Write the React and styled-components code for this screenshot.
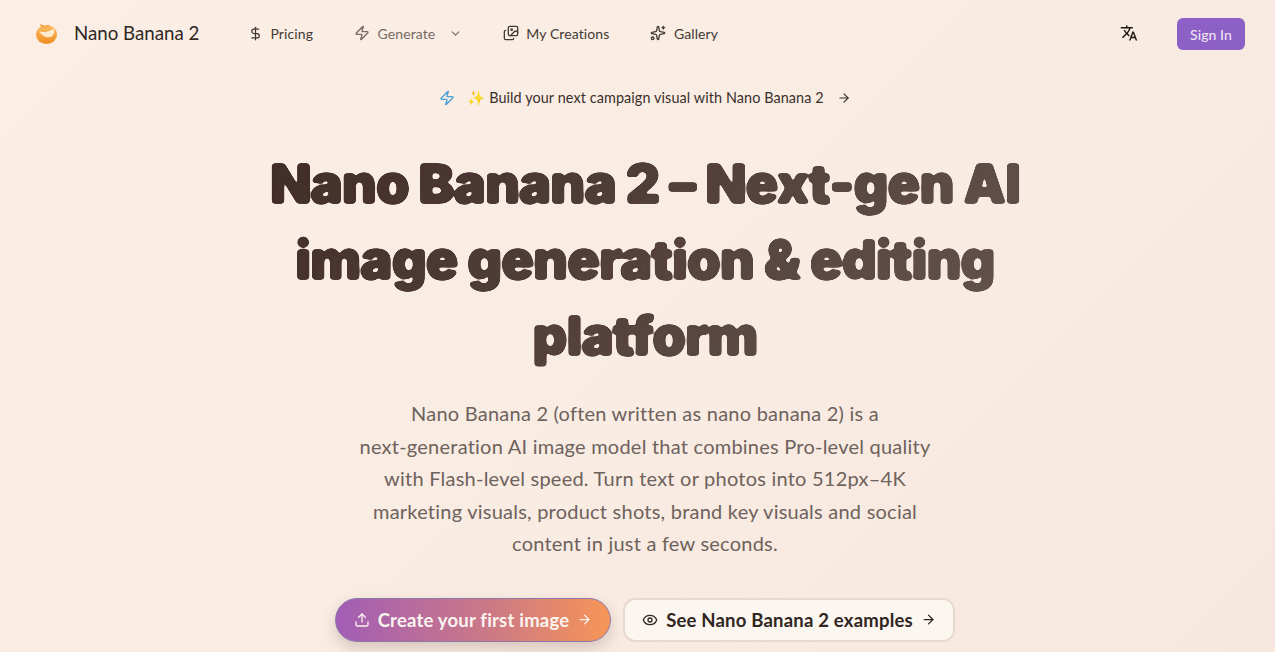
import React from 'react';
import styled, { createGlobalStyle } from 'styled-components';
import { ArrowRight, ChevronDown, DollarSign, Eye, Images, Sparkles, Upload, Zap } from 'lucide-react';
import { MdTranslate } from 'react-icons/md';

const GlobalStyle = createGlobalStyle`
	html, body {
		margin: 0;
		height: 100%;
		overflow: hidden;
	}
	body {
		font-family: 'Lato', 'Noto Sans', sans-serif;
		background: linear-gradient(135deg, #fbeee4 0%, #f9ece3 50%, #f7e8df 100%);
		color: #2f2522;
	}
`;

const Page = styled.div`
	height: 652px;
	overflow: hidden;
`;

const Header = styled.header`
	height: 66px;
	padding: 0 30px 0 35px;
	display: flex;
	align-items: center;
	box-sizing: border-box;
`;

const Brand = styled.div`
	display: flex;
	align-items: center;
	gap: 16px;
	font-size: 18.7px;
	color: #2f2825;
	width: 213px;
	flex-shrink: 0;
`;

const Nav = styled.nav`
	display: flex;
	align-items: center;
	gap: 41px;
	flex: 1;
`;

const NavItem = styled.a`
	display: flex;
	align-items: center;
	gap: 7.5px;
	font-size: 14px;
	letter-spacing: 0.1px;
	color: ${(p) => (p.$muted ? '#776b65' : '#443a36')};
`;

const Caret = styled.span`
	display: flex;
	margin-left: 6px;
	color: #776b65;
`;

const Actions = styled.div`
	display: flex;
	align-items: center;
	gap: 39px;
`;

const SignIn = styled.button`
	height: 32px;
	width: 68px;
	margin-top: 2px;
	border: 0;
	border-radius: 6px;
	background: #8c60c7;
	color: #eee2f2;
	font: 500 14px 'Lato', sans-serif;
	letter-spacing: 0.1px;
`;

const Hero = styled.main`
	display: flex;
	flex-direction: column;
	align-items: center;
	padding-left: 15px;
`;

const Announcement = styled.div`
	margin-top: 23px;
	display: flex;
	align-items: center;
	gap: 8px;
	font-size: 14.4px;
	letter-spacing: 0.1px;
	color: #3a302c;
`;

const AnnouncementText = styled.span`
	margin: 0 5px 0 4px;
`;

const Title = styled.h1`
	margin: 39px 0 0;
	width: 800px;
	text-align: center;
	font: 900 54px/76px 'Inter', sans-serif;
	letter-spacing: -0.95px;
	background: linear-gradient(135deg, #3f2b27 0%, #675750 100%);
	-webkit-background-clip: text;
	background-clip: text;
	color: transparent;
	filter: url(#rounded-heavy);
`;

const Lead = styled.p`
	margin: 23px 0 0;
	width: 600px;
	text-align: center;
	font-size: 20px;
	line-height: 32.5px;
	letter-spacing: 0.23px;
	color: #6e625c;
`;

const Buttons = styled.div`
	margin-top: 38px;
	display: flex;
	gap: 12px;
`;

const PrimaryButton = styled.button`
	height: 44px;
	width: 276px;
	display: flex;
	align-items: center;
	justify-content: center;
	gap: 8px;
	box-sizing: border-box;
	border: 1px solid #8b7aa8;
	border-radius: 22px;
	background: linear-gradient(90deg, #a25db5 0%, #cf7b82 60%, #f79557 100%);
	box-shadow: 0 6px 14px rgba(90, 60, 50, 0.22);
	color: #fbf3ef;
	font: 700 18.5px 'Lato', sans-serif;
	letter-spacing: 0.2px;
`;

const SecondaryButton = styled.button`
	height: 44px;
	width: 332px;
	display: flex;
	align-items: center;
	justify-content: center;
	gap: 8px;
	box-sizing: border-box;
	border: 2px solid #e6d9d0;
	border-radius: 12px;
	background: #fcf6f0;
	color: #2f2522;
	font: 700 18.5px 'Lato', sans-serif;
	letter-spacing: 0.2px;
`;

const FilterDefs = styled.svg`
	width: 0;
	height: 0;
	display: block;
`;

function Logo() {
	return (
		<svg width="23" height="23" viewBox="0 0 24 24">
			<defs>
				<linearGradient id="fruit" x1="0" y1="0" x2="0" y2="1">
					<stop offset="0" stopColor="#fcc06a" />
					<stop offset="1" stopColor="#f08a1e" />
				</linearGradient>
			</defs>
			<ellipse cx="12" cy="13" rx="11" ry="10" fill="url(#fruit)" />
			<path d="M4.500 10c4 1 10 0.500 14.500-3 2 2 1.500 5-1 7.500-4 3-10 1.500-13.500-4.500z" fill="#fdebd0" />
			<path d="M5 2l4 1.500 1.500 2.500-4-1z" fill="#f6a13a" />
			<path d="M10 5.500c1-1.500 3-2 5-1.500" fill="none" stroke="#f4a040" strokeWidth="1.200" />
		</svg>
	);
}

export default function App() {
	return (
		<Page>
			<GlobalStyle />
			<FilterDefs aria-hidden="true">
				<filter id="rounded-heavy" x="-2%" y="-2%" width="104%" height="104%">
					<feGaussianBlur stdDeviation="1.6" />
					<feComponentTransfer>
						<feFuncA type="linear" slope="7" intercept="-1.6" />
					</feComponentTransfer>
				</filter>
			</FilterDefs>
			<Header>
				<Brand>
					<Logo />
					Nano Banana 2
				</Brand>
				<Nav>
					<NavItem><DollarSign size={15} />Pricing</NavItem>
					<NavItem $muted>
						<Zap size={16} />Generate
						<Caret><ChevronDown size={13} /></Caret>
					</NavItem>
					<NavItem><Images size={16} />My Creations</NavItem>
					<NavItem><Sparkles size={16} />Gallery</NavItem>
				</Nav>
				<Actions>
					<MdTranslate size={18} color="#1c1714" />
					<SignIn>Sign In</SignIn>
				</Actions>
			</Header>
			<Hero>
				<Announcement>
					<Zap size={16} color="#4b9fd8" />
					<AnnouncementText>✨ Build your next campaign visual with Nano Banana 2</AnnouncementText>
					<ArrowRight size={14} />
				</Announcement>
				<Title>Nano Banana 2 – Next-gen AI image generation &amp; editing platform</Title>
				<Lead>
					Nano Banana 2 (often written as nano banana 2) is a<br />
					next-generation AI image model that combines Pro-level quality<br />
					with Flash-level speed. Turn text or photos into 512px–4K<br />
					marketing visuals, product shots, brand key visuals and social<br />
					content in just a few seconds.
				</Lead>
				<Buttons>
					<PrimaryButton>
						<Upload size={16} />Create your first image<ArrowRight size={15} />
					</PrimaryButton>
					<SecondaryButton>
						<Eye size={16} />See Nano Banana 2 examples<ArrowRight size={15} />
					</SecondaryButton>
				</Buttons>
			</Hero>
		</Page>
	);
}
